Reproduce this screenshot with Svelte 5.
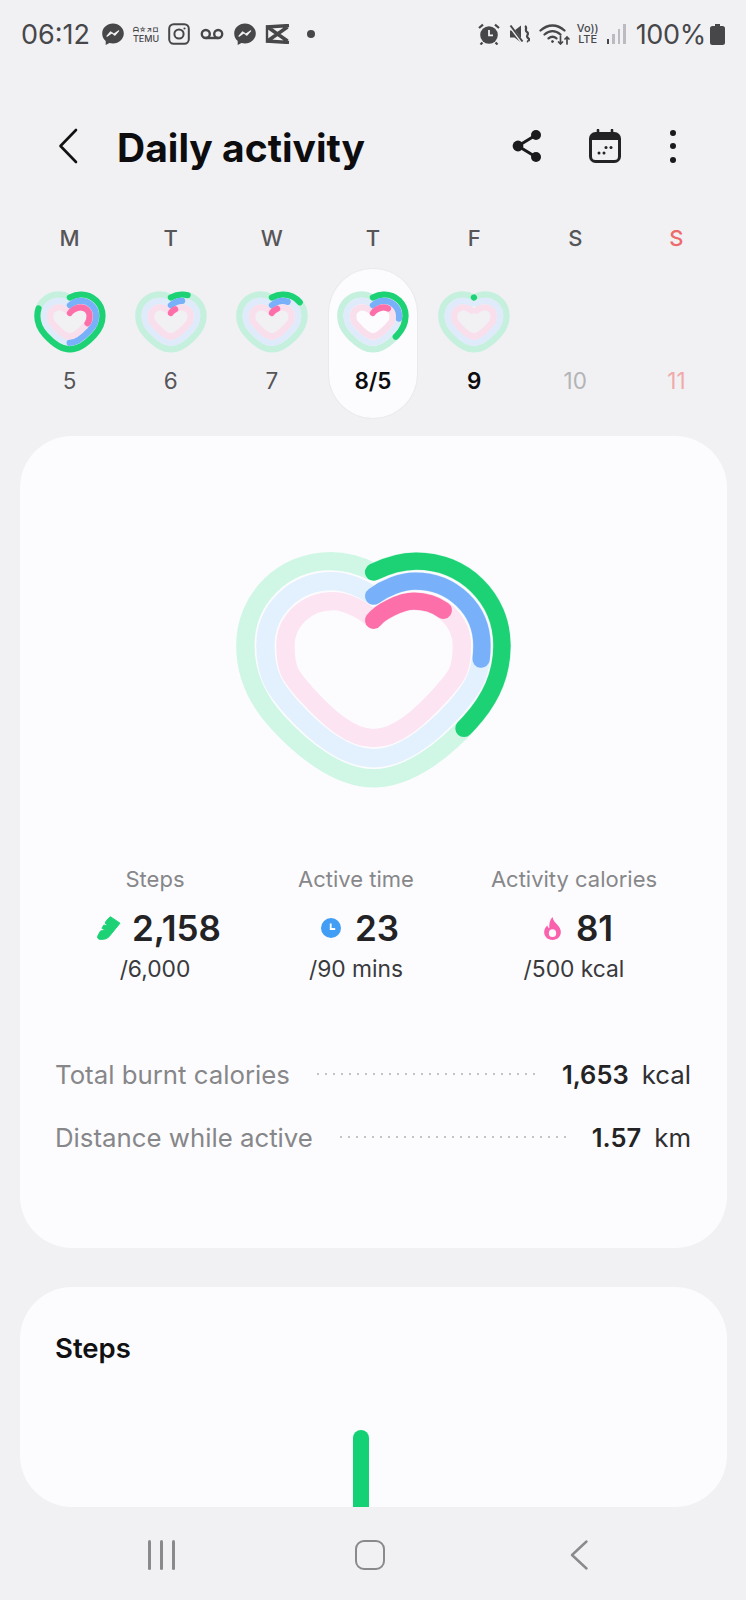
<script>
  // Daily activity screen
  const cx = 488;
  const days = [
    { l: 'M', n: '5', g: 80, b: 50, p: 30 },
    { l: 'T', n: '6', g: 9, b: 8, p: 5 },
    { l: 'W', n: '7', g: 16, b: 11, p: 6 },
    { l: 'T', n: '8/5', g: 36, b: 25, p: 15, sel: true },
    { l: 'F', n: '9', g: 0.01, today: true },
    { l: 'S', n: '10', future: true },
    { l: 'S', n: '11', future: true, sun: true }
  ];

  // heart centreline, o = inset from the outer ring (zoomed units)
  function heart(o) {
    const T = 92 + o, R = 872 - o, B = 742 - o, N = 125 + o * 1.2, Y = 345;
    const lx = 615 - o * 0.05;
    const k = 48 - o * 0.25;
    const m = (x) => 2 * cx - x;
    const px = 775 - o * 0.7, py = 575 - o * 0.72;
    const c = [
      [lx + (R - lx) * 0.56, T], [R, Y - (Y - T) * 0.56], [R, Y],
      [R, 445 - o * 0.15], [828 - o * 0.8, 518 - o * 0.65], [px, py],
      [708 - o * 0.7, 648 - o * 0.72], [600 - o * 0.35, B], [cx, B]
    ];
    let d = `M${cx} ${N}C${cx + k} ${N - 24} ${lx - 42} ${T} ${lx} ${T}`;
    for (let i = 0; i < 9; i += 3) {
      d += `C${c[i][0]} ${c[i][1]} ${c[i + 1][0]} ${c[i + 1][1]} ${c[i + 2][0]} ${c[i + 2][1]}`;
    }
    // mirrored left half, walked back up
    d += `C${m(c[7][0])} ${B} ${m(c[6][0])} ${c[6][1]} ${m(px)} ${py}`;
    d += `C${m(c[4][0])} ${c[4][1]} ${m(R)} ${c[3][1]} ${m(R)} ${Y}`;
    d += `C${m(R)} ${c[1][1]} ${m(c[0][0])} ${T} ${m(lx)} ${T}`;
    d += `C${m(lx - 42)} ${T} ${cx - k} ${N - 24} ${cx} ${N}`;
    return d;
  }
  const rings = [
    { o: 0, bg: '#d0f7e6', fg: '#1dd275', key: 'g' },
    { o: 60, bg: '#e3f0fd', fg: '#78b0fa', key: 'b' },
    { o: 120, bg: '#fce4f2', fg: '#fd6fa9', key: 'p' }
  ];
  // the small hearts have fatter rings
  const miniRings = [
    { o: 10, bg: '#c6f0de', fg: '#1dd275', key: 'g' },
    { o: 84, bg: '#dfebfa', fg: '#78b0fa', key: 'b' },
    { o: 158, bg: '#f9dfec', fg: '#fd6fa9', key: 'p' }
  ];
</script>

{#snippet ringHeart(d, list, sw, cls)}
  <svg class={cls} viewBox="76 62 826 712">
    {#each list as r}
      <path d={heart(r.o)} fill="none" stroke={r.bg} stroke-width={sw} />
    {/each}
    {#each list as r}
      {#if d[r.key]}
        <path d={heart(r.o)} pathLength="100" fill="none" stroke={r.fg} stroke-width={sw - 3} stroke-linecap="round" stroke-dasharray="{d[r.key]} 200" />
      {/if}
    {/each}
  </svg>
{/snippet}

{#snippet messenger()}
  <svg class="si msg" viewBox="0 0 24 24">
    <path d="M12 1.500C6 1.500 1.200 5.900 1.200 11.500c0 3 1.300 5.600 3.500 7.400v4l3.700-2c1.100.3 2.300.5 3.600.5 6 0 10.800-4.400 10.800-9.900S18 1.500 12 1.500z" fill="#47474a" />
    <path d="M6 14.200l3.600-4.300 3.100 2.400 4.900-3.400-3.700 4.300-3-2.400z" fill="#f1f1f4" stroke="#f1f1f4" stroke-width="1.200" stroke-linejoin="round" />
  </svg>
{/snippet}

<div class="screen">
  <div class="status">
    <span class="time">06:12</span>
    {@render messenger()}
    <span class="temu"><i>ᗩ☆↗ロ</i>TEMU</span>
    <svg class="si insta" viewBox="0 0 22 22" fill="none" stroke="#47474a" stroke-width="2">
      <rect x="1.200" y="1.200" width="19.600" height="19.600" rx="4.500" />
      <circle cx="11" cy="11" r="4.600" />
      <circle cx="16.500" cy="5.500" r="1.100" fill="#47474a" stroke="none" />
    </svg>
    <svg class="si vm" viewBox="0 0 24 12" fill="none" stroke="#47474a" stroke-width="2.400">
      <circle cx="5.800" cy="6" r="4" />
      <circle cx="18.200" cy="6" r="4" />
      <path d="M5.800 10h12.400" />
    </svg>
    {@render messenger()}
    <svg class="si cut" viewBox="0 0 25 20" fill="none" stroke="#47474a" stroke-width="3.400">
      <path d="M1 3l23-1.500M1 17l23 1.500M2.500 3l20 14M22.500 3l-20 14" />
      <path d="M2 1.600v16.800" stroke-width="2.400" />
    </svg>
    <span class="dot"></span>
    <span class="spacer"></span>
    <svg class="si alarm" viewBox="0 0 22 22">
      <circle cx="11" cy="12" r="8.800" fill="#47474a" />
      <path d="M11 7v5.400h4" fill="none" stroke="#f1f1f4" stroke-width="1.800" />
      <path d="M1 5l4-3.400M21 5l-4-3.400M4.500 19.500l-2 2M17.500 19.500l2 2" stroke="#47474a" stroke-width="2.200" fill="none" />
    </svg>
    <svg class="si mute" viewBox="0 0 21 22">
      <path d="M1 7.500h4.500L12 2.500v17l-6.500-5H1z" fill="#47474a" />
      <path d="M1 3l12 16" stroke="#f1f1f4" stroke-width="3" />
      <path d="M1.500 2.500l12 16" stroke="#47474a" stroke-width="2" />
      <path d="M16 3c3 2-1 4 2 6s-2 4 1 6-1 3 0 4" fill="none" stroke="#47474a" stroke-width="2.200" />
    </svg>
    <svg class="si wifi" viewBox="0 0 31 22" fill="none" stroke="#47474a" stroke-width="2.300" stroke-linecap="round">
      <path d="M1.500 7.500C9 .8 18 .8 25.500 7.500" />
      <path d="M5.500 11.500c5-4.400 11-4.400 16 0" />
      <path d="M9.500 15.400c2.800-2.400 5.200-2.400 8 0" />
      <circle cx="13.500" cy="18.500" r="1" fill="#47474a" stroke-width="1" />
      <path d="M21.500 13v8M19.500 19l2 2 2-2M28 21v-7M26 16l2-2 2 2" stroke-width="1.700" />
    </svg>
    <span class="volte">Vo))<br />LTE</span>
    <div class="signal"><i></i><i></i><i></i><i></i></div>
    <span class="batt">100%</span>
    <svg class="si battery" viewBox="0 0 15 21">
      <path d="M5 0h5v2h2.500A2.500 2.500 0 0 1 15 4.500V18.500A2.500 2.500 0 0 1 12.500 21h-10A2.500 2.500 0 0 1 0 18.500V4.500A2.500 2.500 0 0 1 2.500 2H5z" fill="#47474a" />
    </svg>
  </div>

  <header class="bar">
    <svg class="back" viewBox="0 0 20 36" fill="none" stroke="#111" stroke-width="2.600" stroke-linecap="round" stroke-linejoin="round">
      <path d="M18 2L2.500 18 18 34" />
    </svg>
    <h1>Daily activity</h1>
    <svg class="share" viewBox="0 0 30 34">
      <path d="M24 6L6 17l18 11" fill="none" stroke="#1a1a1c" stroke-width="3" />
      <circle cx="24" cy="6" r="5" fill="#1a1a1c" />
      <circle cx="6" cy="17" r="5.400" fill="#1a1a1c" />
      <circle cx="24" cy="28" r="5" fill="#1a1a1c" />
    </svg>
    <svg class="cal" viewBox="0 0 32 34">
      <rect x="1.500" y="4.500" width="29" height="28" rx="5" fill="#f1f1f4" stroke="#232325" stroke-width="3" />
      <path d="M1.500 11V9.500a5 5 0 0 1 5-5h19a5 5 0 0 1 5 5V11z" fill="#232325" />
      <path d="M9 1v5M23 1v5" stroke="#232325" stroke-width="2.600" stroke-linecap="round" />
      <g fill="#232325"><circle cx="10" cy="24" r="1.500" /><circle cx="15" cy="24" r="1.500" /><circle cx="17" cy="18.500" r="1.500" /><circle cx="22" cy="18.500" r="1.500" /></g>
    </svg>
    <div class="more"><i></i><i></i><i></i></div>
  </header>

  <div class="week">
    {#each days as d}
      <div class="day">
        <span class="letter" class:sun={d.sun}>{d.l}</span>
        <div class="cell" class:sel={d.sel}>
          {#if !d.future}
            {@render ringHeart(d, miniRings, 74, 'mini')}
          {:else}
            <div class="mini"></div>
          {/if}
          <span class="num" class:strong={d.sel || d.today} class:future={d.future} class:sun={d.sun}>{d.n}</span>
        </div>
      </div>
    {/each}
  </div>

  <section class="card main">
    {@render ringHeart({ g: 36, b: 25.500, p: 15 }, rings, 55, 'big')}

    <div class="stats">
      <div class="stat">
        <span class="cap">Steps</span>
        <div class="val">
          <svg class="ic shoe" viewBox="22 16 72 74"><path d="M62 18L92 38 58 80Q50 88 40 88H28Q20 86 24 76L32 62 48 60 36 54 42 44 56 46 46 38 50 30z" fill="#1dd275" stroke="#1dd275" stroke-width="3" stroke-linejoin="round" /></svg>
          2,158
        </div>
        <span class="sub">/6,000</span>
      </div>
      <div class="stat">
        <span class="cap">Active time</span>
        <div class="val">
          <svg class="ic" viewBox="0 0 20 20"><circle cx="10" cy="10" r="10" fill="#429ef5" /><path d="M9.700 5.500V11h4.500" fill="none" stroke="#fff" stroke-width="1.800" /></svg>
          23
        </div>
        <span class="sub">/90 mins</span>
      </div>
      <div class="stat">
        <span class="cap">Activity calories</span>
        <div class="val">
          <svg class="ic flame" viewBox="0 0 18 24"><path d="M9 1c.6 3.400 2.400 4.900 4.200 6.900C15.600 10.500 17 12.600 17 15.400 17 20 13.500 23 9 23s-8-3-8-7.600c0-2.700 1.300-4.900 3.100-6.400.3 1.300.9 2.100 1.900 2.600C5.500 7.500 6.500 3.500 9 1z" fill="#fa62ad" /><ellipse cx="9" cy="16.500" rx="3.500" ry="3.700" fill="#fcfcfe" /></svg>
          81
        </div>
        <span class="sub">/500 kcal</span>
      </div>
    </div>

    <div class="rows">
      <div class="row">
        <span class="k">Total burnt calories</span>
        <span class="dots"></span>
        <b>1,653</b><span class="unit">kcal</span>
      </div>
      <div class="row">
        <span class="k">Distance while active</span>
        <span class="dots"></span>
        <b>1.57</b><span class="unit">km</span>
      </div>
    </div>
  </section>

  <section class="card steps">
    <h2>Steps</h2>
    <div class="chart"><div class="stepbar"></div></div>
  </section>

  <nav class="nav">
    <div class="recents"><i></i><i></i><i></i></div>
    <div class="home"></div>
    <svg class="navback" viewBox="0 0 18 30" fill="none" stroke="#8a8a8d" stroke-width="2.400" stroke-linecap="round" stroke-linejoin="round">
      <path d="M16.500 1.500L2 15l14.500 13.500" />
    </svg>
  </nav>
</div>

<style>
  :global(body) {
    margin: 0;
    background: #f1f1f4;
  }

  .screen {
    width: 746px;
    height: 1600px;
    overflow: hidden;
    background: #f1f1f4;
    font-family: Inter, Roboto, sans-serif;
    color: #232325;
  }

  .status {
    height: 68px;
    display: flex;
    align-items: center;
    padding: 0 21px 0 21px;
    color: #47474a;
  }

  .time { font-size: 27px; width: 68px; margin-right: 12px; white-space: nowrap; }
  .si { display: block; flex: none; }
  .msg { width: 24px; height: 24px; margin-right: 7px; }
  .temu {
    width: 28px;
    margin-right: 8px;
    font-size: 9px;
    line-height: 9px;
    font-weight: 500;
    text-align: center;
  }
  .temu i { display: block; font-style: normal; font-size: 7px; font-weight: 700; line-height: 8px; white-space: nowrap; }
  .insta { width: 22px; height: 22px; margin-right: 10px; }
  .vm { width: 24px; height: 12px; margin-right: 9px; }
  .cut { width: 25px; height: 20px; margin-left: 1px; margin-right: 17px; }
  .dot { width: 8px; height: 8px; border-radius: 50%; background: #47474a; }
  .spacer { flex: 1; }
  .alarm { width: 22px; height: 22px; margin-right: 9px; }
  .mute { width: 21px; height: 22px; margin-right: 9px; }
  .wifi { width: 31px; height: 22px; margin-right: 7px; }
  .volte {
    width: 22px;
    margin-right: 8px;
    font-size: 11px;
    line-height: 11px;
    font-weight: 500;
    text-align: center;
  }
  .signal { display: flex; align-items: flex-end; gap: 3px; height: 20px; margin-right: 10px; }
  .signal i { display: block; width: 2.500px; background: #bcbcc0; }
  .signal i:nth-child(1) { height: 5px; background: #47474a; }
  .signal i:nth-child(2) { height: 10px; }
  .signal i:nth-child(3) { height: 15px; }
  .signal i:nth-child(4) { height: 20px; }
  .batt { font-size: 27px; margin-right: 4px; letter-spacing: -0.3px; }
  .battery { width: 15px; height: 21px; }

  .bar {
    height: 86px;
    margin-top: 35px;
    display: flex;
    align-items: center;
    padding-left: 58px;
  }
  .back { width: 20px; height: 36px; margin-right: 39px; }
  h1 {
    margin: 0;
    padding-top: 2px;
    width: 395px;
    font-size: 39px;
    font-weight: 700;
    color: #0d0d0f;
    white-space: nowrap;
  }
  .share { width: 30px; height: 34px; margin-right: 47px; }
  .cal { width: 32px; height: 34px; margin-right: 49px; }
  .more { display: flex; flex-direction: column; gap: 7.500px; }
  .more i { display: block; width: 6px; height: 6px; border-radius: 50%; background: #1a1a1c; }

  .week {
    display: grid;
    grid-template-columns: repeat(7, 1fr);
    padding: 0 19px;
    height: 247px;
    box-sizing: border-box;
  }
  .day { display: flex; flex-direction: column; align-items: center; }
  .letter {
    height: 30px;
    margin-top: 34px;
    line-height: 30px;
    font-size: 22px;
    font-weight: 500;
    color: #565658;
  }
  .letter.sun { color: #ec6a6a; }
  .cell {
    width: 88px;
    height: 149px;
    margin-top: 16px;
    border-radius: 44px;
    display: flex;
    flex-direction: column;
    align-items: center;
    box-sizing: border-box;
    padding-top: 22px;
  }
  .cell.sel { background: #fcfcfe; box-shadow: 0 0 0 1px #eaeaee; }
  :global(.mini) { width: 72px; height: 62px; display: block; }
  .num { margin-top: 15px; font-size: 22.500px; line-height: 26px; color: #565658; }
  .num.strong { color: #0d0d0f; font-weight: 600; }
  .num.future { color: #b4b4b7; }
  .num.future.sun { color: #f0aaaa; }

  .card {
    margin: 0 19px 0 20px;
    background: #fcfcfe;
    border-radius: 52px;
    overflow: hidden;
  }
  .main {
    height: 812px;
    box-sizing: border-box;
    padding-top: 115px;
    display: flex;
    flex-direction: column;
    align-items: stretch;
  }
  :global(.big) { display: block; width: 276px; height: 238px; margin: 0 auto; }

  .stats {
    display: grid;
    grid-template-columns: 190px 212px 224px;
    padding-left: 40px;
    margin-top: 75px;
  }
  .stat { display: flex; flex-direction: column; align-items: center; }
  .cap { font-size: 22px; line-height: 30px; color: #87878a; white-space: nowrap; }
  .val {
    display: flex;
    align-items: center;
    gap: 11px;
    margin-top: 12px;
    padding-left: 8px;
    font-size: 35px;
    line-height: 44px;
    font-weight: 600;
    color: #232325;
  }
  .ic { display: block; width: 20px; height: 20px; margin-right: 3px; }
  .shoe { width: 24px; height: 24px; margin-right: 0; }
  .flame { width: 19px; height: 25px; }
  .sub { margin-top: 4px; font-size: 22.800px; line-height: 30px; color: #3a3a3c; }

  .rows { margin-top: 70px; padding: 0 36px 0 35px; display: flex; flex-direction: column; gap: 23px; }
  .row { display: flex; align-items: center; height: 40px; font-size: 25.800px; }
  .k { color: #87878a; white-space: nowrap; }
  .dots {
    flex: 1;
    height: 4px;
    margin: 0 24px;
    background: radial-gradient(circle, #c4c4c7 1.100px, transparent 1.400px) 0 0 / 8px 4px repeat-x;
  }
  .row b { font-weight: 600; font-size: 25.500px; color: #232325; }
  .unit { margin-left: 13px; color: #303032; }

  .steps {
    margin-top: 39px;
    height: 220px;
    display: flex;
    flex-direction: column;
  }
  h2 {
    margin: 0;
    padding: 42px 0 0 35px;
    font-size: 27.500px;
    line-height: 38px;
    font-weight: 600;
    color: #111113;
  }
  .chart { flex: 1; display: flex; align-items: flex-end; padding-left: 333px; }
  .stepbar { width: 16px; height: 77px; background: #14d176; border-radius: 8px 8px 0 0; }

  .nav { height: 93px; display: flex; align-items: center; padding-top: 2px; box-sizing: border-box; padding-left: 148px; }
  .recents { display: flex; gap: 9.500px; margin-right: 180px; }
  .recents i { display: block; width: 2.500px; height: 30px; border-radius: 2px; background: #8a8a8d; }
  .home { width: 26px; height: 26px; border: 2.500px solid #8a8a8d; border-radius: 9px; margin-right: 185px; }
  .navback { width: 18px; height: 30px; }
</style>
